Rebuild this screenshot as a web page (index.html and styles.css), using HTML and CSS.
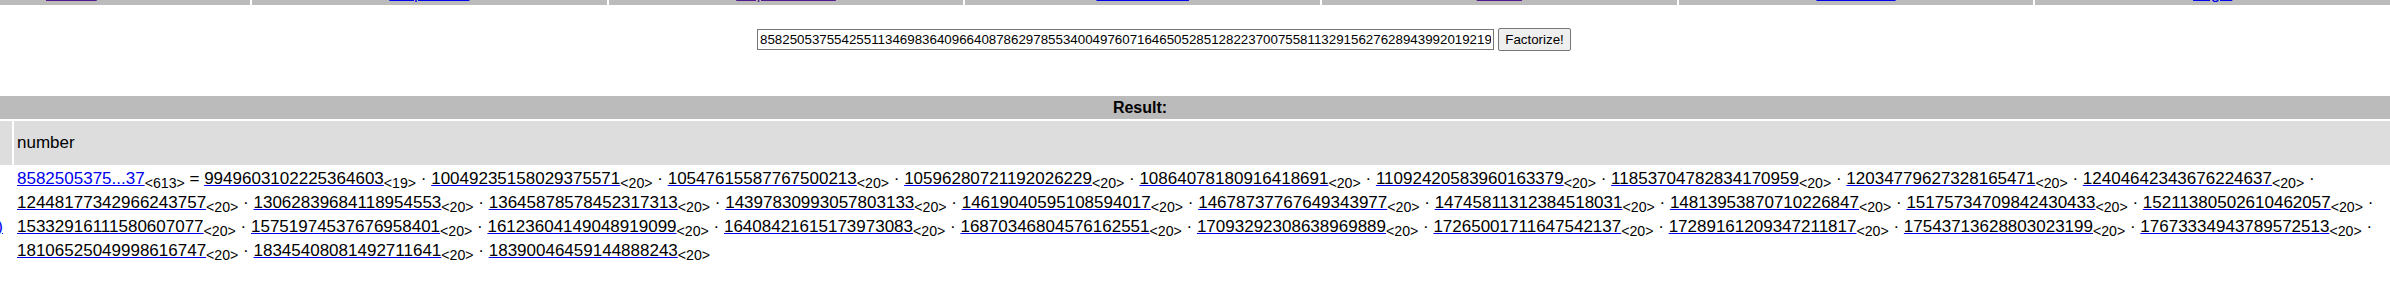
FILE: index.html
```html
<!DOCTYPE html>
<html lang="en">
<head>
  <meta charset="UTF-8">
  <title>factordb.com</title>
  <link rel="stylesheet" href="styles.css">
</head>
<body>
  <div class="nav">
    <div class="nav-cell first"><a class="visited" href="#">Search</a></div>
    <div class="nav-cell"><a href="#">Sequences</a></div>
    <div class="nav-cell"><a class="visited" href="#">Report results</a></div>
    <div class="nav-cell"><a href="#">Factor tables</a></div>
    <div class="nav-cell"><a class="visited" href="#">Status</a></div>
    <div class="nav-cell"><a href="#">Downloads</a></div>
    <div class="nav-cell"><a href="#">Login</a></div>
  </div>

  <form class="search">
    <input type="text" class="query" value="8582505375542551134698364096640878629785534004976071646505285128223700755811329156276289439920192191573846202958317465">
    <button type="submit" class="go">Factorize!</button>
  </form>

  <div class="result">
    <div class="result-head">Result:</div>

    <div class="side shade"></div>
    <div class="cell shade label">number</div>

    <div class="side status"><a href="#">(show)</a></div>
    <div class="cell factors">
      <a class="num" href="#">8582505375...37</a><sub>&lt;613&gt;</sub> = <a class="f" href="#">9949603102225364603</a><sub>&lt;19&gt;</sub> &middot; <a class="f" href="#">10049235158029375571</a><sub>&lt;20&gt;</sub> &middot; <a class="f" href="#">10547615587767500213</a><sub>&lt;20&gt;</sub> &middot; <a class="f" href="#">10596280721192026229</a><sub>&lt;20&gt;</sub> &middot; <a class="f" href="#">10864078180916418691</a><sub>&lt;20&gt;</sub> &middot; <a class="f" href="#">11092420583960163379</a><sub>&lt;20&gt;</sub> &middot; <a class="f" href="#">11853704782834170959</a><sub>&lt;20&gt;</sub> &middot; <a class="f" href="#">12034779627328165471</a><sub>&lt;20&gt;</sub> &middot; <a class="f" href="#">12404642343676224637</a><sub>&lt;20&gt;</sub> &middot;
      <a class="f" href="#">12448177342966243757</a><sub>&lt;20&gt;</sub> &middot; <a class="f" href="#">13062839684118954553</a><sub>&lt;20&gt;</sub> &middot; <a class="f" href="#">13645878578452317313</a><sub>&lt;20&gt;</sub> &middot; <a class="f" href="#">14397830993057803133</a><sub>&lt;20&gt;</sub> &middot; <a class="f" href="#">14619040595108594017</a><sub>&lt;20&gt;</sub> &middot; <a class="f" href="#">14678737767649343977</a><sub>&lt;20&gt;</sub> &middot; <a class="f" href="#">14745811312384518031</a><sub>&lt;20&gt;</sub> &middot; <a class="f" href="#">14813953870710226847</a><sub>&lt;20&gt;</sub> &middot; <a class="f" href="#">15175734709842430433</a><sub>&lt;20&gt;</sub> &middot; <a class="f" href="#">15211380502610462057</a><sub>&lt;20&gt;</sub> &middot;
      <a class="f" href="#">15332916111580607077</a><sub>&lt;20&gt;</sub> &middot; <a class="f" href="#">15751974537676958401</a><sub>&lt;20&gt;</sub> &middot; <a class="f" href="#">16123604149048919099</a><sub>&lt;20&gt;</sub> &middot; <a class="f" href="#">16408421615173973083</a><sub>&lt;20&gt;</sub> &middot; <a class="f" href="#">16870346804576162551</a><sub>&lt;20&gt;</sub> &middot; <a class="f" href="#">17093292308638969889</a><sub>&lt;20&gt;</sub> &middot; <a class="f" href="#">17265001711647542137</a><sub>&lt;20&gt;</sub> &middot; <a class="f" href="#">17289161209347211817</a><sub>&lt;20&gt;</sub> &middot; <a class="f" href="#">17543713628803023199</a><sub>&lt;20&gt;</sub> &middot; <a class="f" href="#">17673334943789572513</a><sub>&lt;20&gt;</sub> &middot;
      <a class="f" href="#">18106525049998616747</a><sub>&lt;20&gt;</sub> &middot; <a class="f" href="#">18345408081492711641</a><sub>&lt;20&gt;</sub> &middot; <a class="f" href="#">18390046459144888243</a><sub>&lt;20&gt;</sub>
    </div>
  </div>
</body>
</html>
```

FILE: styles.css
```css
body {
  margin: 0;
  font-family: "Liberation Sans", Arial, sans-serif;
  font-size: 16px;
  color: #000;
  background: #fff;
}

a {
  color: #0000ee;
}

a.visited {
  color: #551a8b;
}

/* top menu, scrolled so only the bottom of it shows */
.nav {
  display: flex;
  gap: 2px;
}

.nav-cell {
  flex: 1;
  height: 5px;
  overflow: hidden;
  background: #bbbbbb;
  display: flex;
  justify-content: center;
  align-items: flex-end;
}

.nav-cell.first {
  flex: 0 0 250px;
  justify-content: flex-start;
  padding-left: 46px;
  box-sizing: border-box;
}

.nav-cell a {
  line-height: 16px;
  margin-bottom: 3px;
  white-space: nowrap;
}

.search {
  display: flex;
  justify-content: center;
  align-items: center;
  gap: 4px;
  padding: 23px 62px 0 0;
  margin: 0;
}

.query {
  width: 737px;
  height: 21px;
  box-sizing: border-box;
  padding: 1px 2px;
  border: 1px solid #767676;
  font-family: "Liberation Sans", Arial, sans-serif;
  font-size: 13.33px;
  color: #000;
}

.go {
  width: 73px;
  height: 23px;
  box-sizing: border-box;
  padding: 1px 6px;
  border: 1px solid #767676;
  border-radius: 2px;
  background: #efefef;
  font-family: "Liberation Sans", Arial, sans-serif;
  font-size: 13.33px;
  color: #000;
}

.result {
  display: grid;
  grid-template-columns: 12px 1fr;
  gap: 2px;
  margin-top: 45px;
}

.result-head {
  grid-column: 1 / -1;
  height: 23px;
  line-height: 23px;
  background: #bbbbbb;
  font-weight: bold;
  text-align: center;
  padding-right: 110px;
}

.shade {
  background: #dddddd;
}

/* status column, mostly scrolled out of view on the left */
.side.status {
  display: flex;
  justify-content: flex-end;
  align-items: flex-start;
  overflow: hidden;
  padding: 48px 9px 0 0;
  font-size: 17px;
  line-height: 24px;
  white-space: nowrap;
}

.cell {
  font-size: 17px;
  padding: 0 3px;
}

.label {
  height: 44px;
  display: flex;
  align-items: center;
}

.factors {
  line-height: 24px;
}

.factors sub {
  font-size: smaller;
  line-height: 0;
}

.factors a.f {
  color: #000;
  text-decoration-color: #0000ee;
}
```
